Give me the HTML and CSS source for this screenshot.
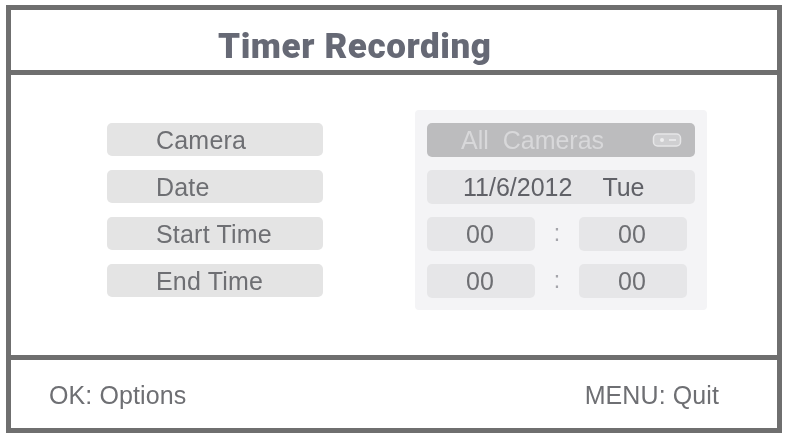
FILE: index.html
```html
<!DOCTYPE html>
<html lang="en">
<head>
<meta charset="utf-8">
<title>Timer Recording</title>
<link rel="stylesheet" href="styles.css">
</head>
<body>
<div class="frame">
  <header class="title-bar"><h1>Timer Recording</h1></header>
  <main class="content">
    <div class="labels">
      <div class="label">Camera</div>
      <div class="label">Date</div>
      <div class="label">Start Time</div>
      <div class="label">End Time</div>
    </div>
    <div class="panel">
      <div class="field selected">
        <span class="all">All&nbsp; Cameras</span>
        <svg class="remote" width="30" height="16" viewBox="0 0 30 16" aria-hidden="true">
          <rect x="1.5" y="2" width="27" height="12" rx="4" fill="#cfcfd1" stroke="#e6e6e8" stroke-width="1.5"/>
          <circle cx="10" cy="8" r="2" fill="#eeeeef"/>
          <rect x="17" y="7" width="7" height="2" fill="#e6e6e8"/>
        </svg>
      </div>
      <div class="field date"><span>11/6/2012</span><span>Tue</span></div>
      <div class="time-row">
        <div class="cell">00</div><div class="sep">:</div><div class="cell">00</div>
      </div>
      <div class="time-row">
        <div class="cell">00</div><div class="sep">:</div><div class="cell">00</div>
      </div>
    </div>
  </main>
  <footer class="foot"><span>OK: Options</span><span>MENU: Quit</span></footer>
</div>
</body>
</html>
```
FILE: styles.css
```css
* { box-sizing: border-box; }
html, body { margin: 0; height: 100%; background: #fff; }
body { padding: 5px 5px 1px 6px; font-family: "Liberation Sans", Arial, sans-serif; color: #6e6f73; }
.frame {
  width: 776px; height: 428px;
  border: 5px solid #6f6f6f;
  display: flex; flex-direction: column;
  filter: blur(0.5px);
}
.title-bar {
  height: 65px; flex: none;
  border-bottom: 5px solid #6f6f6f;
  padding: 12px 0 0 207px;
  display: flex; align-items: center;
}
h1 {
  margin: 0;
  font: 900 35px/1 Roboto, sans-serif;
  letter-spacing: 0.58px;
  color: #666975;
}
.content {
  height: 285px; flex: none;
  border-bottom: 5px solid #6f6f6f;
  padding: 35px 0 0 96px;
  display: flex; align-items: flex-start;
}
.labels { width: 216px; margin-top: 13px; display: flex; flex-direction: column; gap: 14px; }
.label {
  height: 33px; padding-left: 49px;
  background: #e4e4e4; border-radius: 5px;
  font-size: 25px; line-height: 35px; letter-spacing: 0.2px;
}
.panel {
  width: 292px; height: 200px; margin-left: 92px;
  padding: 13px 12px;
  background: #f4f4f6; border-radius: 4px;
  display: flex; flex-direction: column; gap: 13px;
}
.field {
  height: 34px; flex: none; border-radius: 5px;
  font-size: 25px; line-height: 34px;
  display: flex; align-items: center;
}
.selected { background: #bcbcbe; color: #d8d8da; padding: 0 13px 0 34px; justify-content: space-between; }
.date { background: #e6e6e8; padding-left: 36px; gap: 30px; color: #606167; }
.time-row { height: 34px; flex: none; display: flex; width: 260px; }
.cell {
  width: 108px; height: 34px; background: #e6e6e8; border-radius: 5px;
  font-size: 25px; line-height: 34px; text-align: center; padding-right: 2px;
}
.sep { width: 44px; text-align: center; font-size: 23px; line-height: 32px; color: #a5a5ab; }
.foot {
  flex: 1; padding: 3px 58px 0 38px;
  display: flex; align-items: center; justify-content: space-between;
  font-size: 25px; letter-spacing: 0.1px; color: #6e6f73;
}
```
